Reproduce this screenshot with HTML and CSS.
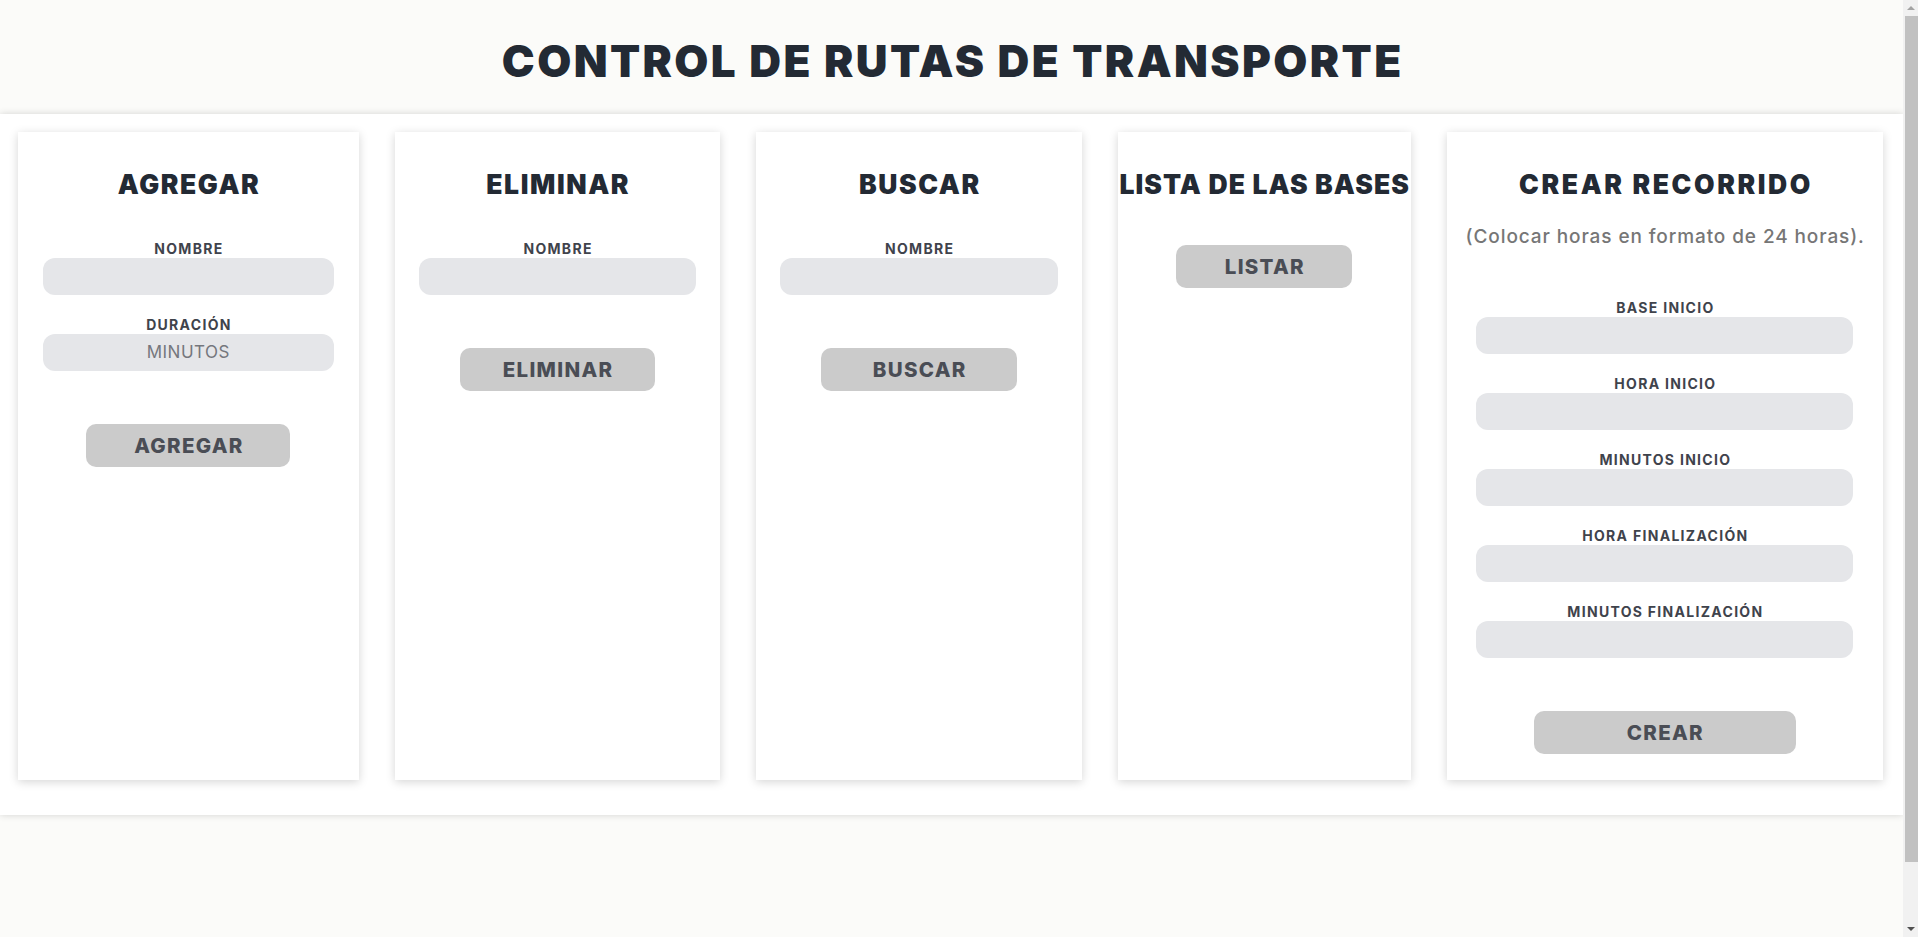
FILE: index.html
```html
<!DOCTYPE html>
<html lang="es">
<head>
<meta charset="utf-8">
<title>Control de rutas de transporte</title>
<link rel="stylesheet" href="styles.css">
</head>
<body>
<div class="page">
  <header class="top">
    <h1 class="title">CONTROL DE RUTAS DE TRANSPORTE</h1>
  </header>
  <main class="panel">
    <section class="card">
      <h2 class="card-title">AGREGAR</h2>
      <div class="fields">
        <label class="field">
          <span class="field-label">NOMBRE</span>
          <input class="field-input" type="text">
        </label>
        <label class="field">
          <span class="field-label">DURACIÓN</span>
          <input class="field-input" type="text" placeholder="MINUTOS">
        </label>
      </div>
      <button class="btn">AGREGAR</button>
    </section>
    <section class="card">
      <h2 class="card-title">ELIMINAR</h2>
      <div class="fields">
        <label class="field">
          <span class="field-label">NOMBRE</span>
          <input class="field-input" type="text">
        </label>
      </div>
      <button class="btn">ELIMINAR</button>
    </section>
    <section class="card">
      <h2 class="card-title">BUSCAR</h2>
      <div class="fields">
        <label class="field">
          <span class="field-label">NOMBRE</span>
          <input class="field-input" type="text">
        </label>
      </div>
      <button class="btn">BUSCAR</button>
    </section>
    <section class="card">
      <h2 class="card-title card-title--list">LISTA DE LAS BASES</h2>
      <button class="btn btn--list">LISTAR</button>
    </section>
    <section class="card">
      <h2 class="card-title card-title--route">CREAR RECORRIDO</h2>
      <p class="note">(Colocar horas en formato de 24 horas).</p>
      <div class="fields fields--route">
        <label class="field">
          <span class="field-label">BASE INICIO</span>
          <input class="field-input" type="text">
        </label>
        <label class="field">
          <span class="field-label">HORA INICIO</span>
          <input class="field-input" type="text">
        </label>
        <label class="field">
          <span class="field-label">MINUTOS INICIO</span>
          <input class="field-input" type="text">
        </label>
        <label class="field">
          <span class="field-label">HORA FINALIZACIÓN</span>
          <input class="field-input" type="text">
        </label>
        <label class="field">
          <span class="field-label">MINUTOS FINALIZACIÓN</span>
          <input class="field-input" type="text">
        </label>
      </div>
      <button class="btn">CREAR</button>
    </section>
  </main>
</div>
<aside class="scrollbar" aria-hidden="true">
  <span class="sb-arrow sb-arrow--up"></span>
  <span class="sb-thumb"></span>
  <span class="sb-track"></span>
  <span class="sb-arrow sb-arrow--down"></span>
</aside>
</body>
</html>
```

FILE: styles.css
```css
* { box-sizing: border-box; }

html, body {
  margin: 0;
  padding: 0;
}

body {
  background: #fbfbf9;
  font-family: Inter, "Open Sans", "Liberation Sans", sans-serif;
  color: #232a34;
  min-height: 100vh;
  display: flex;
  align-items: stretch;
  overflow: hidden;
}

.page {
  flex: 1 1 auto;
  min-width: 0;
}

/* imitation of the browser scrollbar seen in the capture */
.scrollbar {
  flex: 0 0 15px;
  height: 100vh;
  background: #f1f1f1;
  display: flex;
  flex-direction: column;
  align-items: stretch;
}

.sb-arrow {
  flex: 0 0 16px;
  display: flex;
  align-items: center;
  justify-content: center;
}

.sb-arrow::before {
  content: "";
  width: 0;
  height: 0;
  border-left: 4px solid transparent;
  border-right: 4px solid transparent;
}

.sb-arrow--up::before {
  border-bottom: 4px solid #a3a3a3;
}

.sb-arrow--down::before {
  border-top: 4px solid #505050;
}

.sb-thumb {
  flex: 0 0 846px;
  margin-left: 2px;
  background: #c1c1c1;
}

.sb-track {
  flex: 1 1 auto;
}

.top {
  padding: 35px 0 27px;
  text-align: center;
}

.title {
  margin: 0;
  font-size: 44px;
  line-height: 52px;
  font-weight: 900;
  letter-spacing: 2.4px;
  padding-left: 2.4px;
  color: #232a34;
}

.panel {
  background: #ffffff;
  box-shadow: 0 0 7px rgba(0, 0, 0, 0.16);
  padding: 18px 20px 35px 18px;
  display: grid;
  grid-template-columns: 341fr 326fr 326fr 293fr 437fr;
  column-gap: 36px;
  align-items: stretch;
}

.card {
  background: #ffffff;
  box-shadow: 0 2px 9px rgba(0, 0, 0, 0.17);
  padding: 36px 0 26px;
  display: flex;
  flex-direction: column;
  align-items: center;
  text-align: center;
  min-width: 0;
}

.card-title {
  margin: 0;
  font-size: 26.5px;
  line-height: 33px;
  font-weight: 900;
  letter-spacing: 1.6px;
  padding-left: 1.6px;
  color: #232a34;
  white-space: nowrap;
}

.card-title--list {
  letter-spacing: 1.1px;
  padding-left: 1.1px;
}

.card-title--route {
  letter-spacing: 2.6px;
  padding-left: 2.6px;
}

.note {
  margin: 24px 0 0;
  font-size: 19px;
  line-height: 23px;
  font-weight: 500;
  color: #767676;
  letter-spacing: 0.9px;
  padding-left: 0.9px;
  white-space: nowrap;
}

.fields {
  width: 85.3%;
  margin-top: 39.5px;
  display: flex;
  flex-direction: column;
  gap: 22px;
}

.fields--route {
  width: 86.3%;
  margin-top: 51.5px;
}

.field {
  display: flex;
  flex-direction: column;
  align-items: stretch;
  gap: 1px;
}

.field-label {
  font-size: 14px;
  line-height: 16px;
  font-weight: 700;
  letter-spacing: 1.3px;
  padding-left: 1.3px;
  color: #3f434c;
}

.field-input {
  display: block;
  width: 100%;
  height: 37px;
  border: none;
  border-radius: 12px;
  background: #e5e6e9;
  font-family: inherit;
  font-size: 17px;
  color: #3f434c;
  text-align: center;
  outline: none;
  padding: 0 10px;
}

.field-input::placeholder {
  color: #75777d;
  letter-spacing: 0.5px;
  opacity: 1;
}

.btn {
  margin-top: 53px;
  width: 60%;
  height: 43px;
  border: none;
  border-radius: 10px;
  background: #cbcbcb;
  font-family: inherit;
  font-size: 20.5px;
  font-weight: 800;
  letter-spacing: 1.3px;
  color: #4a4d55;
  cursor: pointer;
  padding: 0 0 0 1.3px;
}

.btn--list {
  margin-top: 43.5px;
}
```
